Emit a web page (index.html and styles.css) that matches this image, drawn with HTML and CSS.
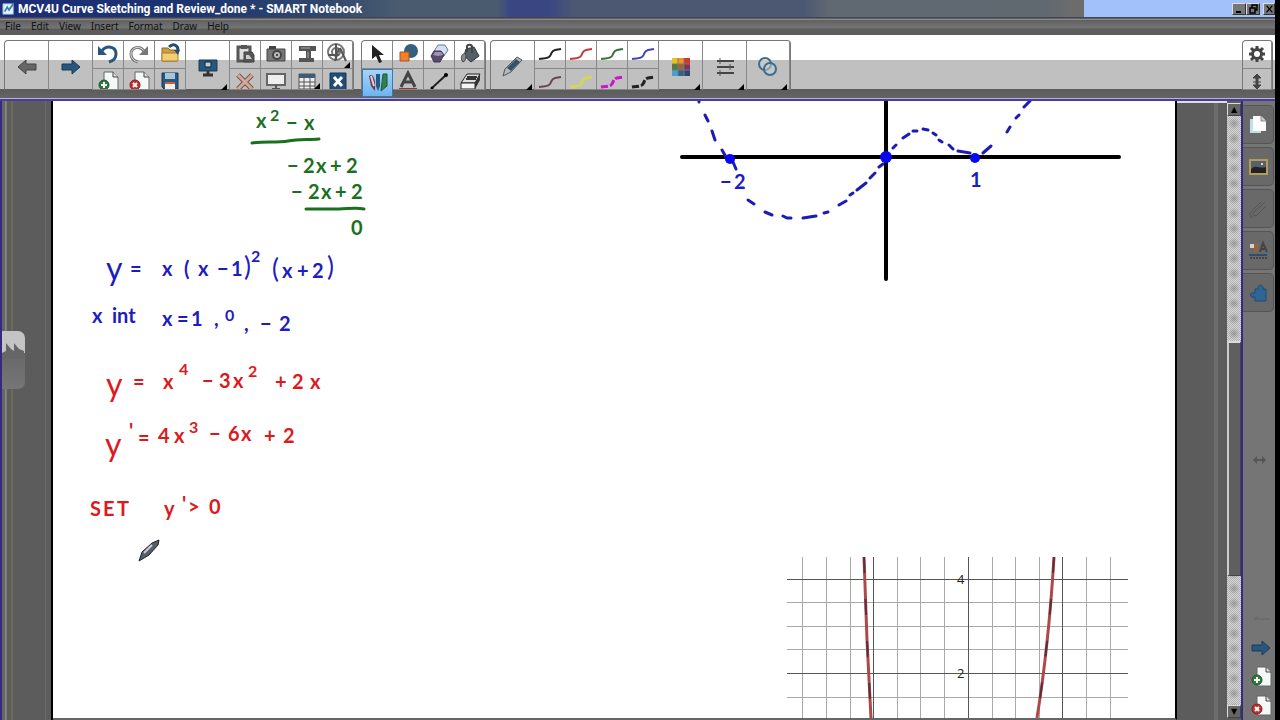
FILE: index.html
```html
<!DOCTYPE html>
<html lang="en">
<head>
    <meta charset="UTF-8">
    <meta name="viewport" content="width=device-width, initial-scale=1.0">
    <title>MCV4U Curve Sketching and Review_done * - SMART Notebook</title>
    <link rel="stylesheet" href="styles.css">
</head>
<body>
    <!-- shared icons -->
    <svg class="defs" aria-hidden="true">
        <symbol id="i-next" viewBox="0 0 24 24"><path d="M3 9h10V5l8 7-8 7v-4H3z" fill="#28567c" stroke="#183a58"/></symbol>
        <symbol id="i-page" viewBox="0 0 24 24"><path d="M8 2h9l5 5v14H8z" fill="#f4f8f8" stroke="#666"/><path d="M17 2v5h5" fill="#ddd" stroke="#444"/></symbol>
        <symbol id="i-add" viewBox="0 0 24 24"><use href="#i-page"/><circle cx="8" cy="15" r="5" fill="#2e7a3e" stroke="#1f5a2b"/><path d="M5 15h6M8 12v6" stroke="#fff" stroke-width="2"/></symbol>
        <symbol id="i-del" viewBox="0 0 24 24"><use href="#i-page"/><circle cx="8" cy="15" r="5" fill="#c22f2f" stroke="#8a1c1c"/><path d="M6 13l4 4M10 13l-4 4" stroke="#fff" stroke-width="2"/></symbol>
        <symbol id="i-line" viewBox="0 0 24 24"><path d="M1 17c5-1 9 0 11-3s1-5 5-6l6-1" fill="none" stroke="currentColor"/></symbol>
    </svg>

    <div class="window">
        <header class="titlebar">
            <svg class="app-icon" viewBox="0 0 16 16"><path d="M1 2h12v12H1z" fill="#e8f2fa" stroke="#7aa6cc"/><path d="M3 11l3-5 2 3 5-7" fill="none" stroke="#3a80b0" stroke-width="2"/></svg>
            <h1>MCV4U Curve Sketching and Review_done * - SMART Notebook</h1>
            <div class="window-buttons">
                <button aria-label="Minimize"><svg viewBox="0 0 12 10"><path d="M3 8h5" stroke="#000" stroke-width="2"/></svg></button>
                <button aria-label="Restore"><svg viewBox="0 0 12 10"><path d="M5 4V1h5v5H8M3 4h5v5H3z" fill="none" stroke="#000" stroke-width="1.5"/></svg></button>
                <button class="close" aria-label="Close"><svg viewBox="0 0 12 10"><path d="M3 1l7 8M10 1L3 9" stroke="#000" stroke-width="1.5"/></svg></button>
            </div>
        </header>

        <nav class="menubar">
            <button>File</button>
            <button>Edit</button>
            <button>View</button>
            <button>Insert</button>
            <button>Format</button>
            <button>Draw</button>
            <button>Help</button>
        </nav>

        <div class="toolbar">
            <div class="group">
                <button class="wide" aria-label="Previous page"><svg viewBox="0 0 24 24"><path d="M21 9H11V5l-8 7 8 7v-4h10z" fill="#666" stroke="#444"/></svg></button>
                <button class="wide" aria-label="Next page"><svg><use href="#i-next"/></svg></button>
                <button aria-label="Undo"><svg viewBox="0 0 24 24"><path d="M6 9c4-6 14-5 14 3 0 4-3 7-7 8" fill="none" stroke="#28567c" stroke-width="3"/><path d="M2 4v9h9z" fill="#28567c"/></svg></button>
                <button aria-label="Redo"><svg viewBox="0 0 24 24"><path d="M17 9C13 3 4 5 4 12c0 4 3 7 7 8" fill="none" stroke="#777" stroke-width="3"/><path d="M17 9C13 3 4 5 4 12c0 4 3 7 7 8" fill="none" stroke="#ddd"/><path d="M21 4v9h-9z" fill="#777"/></svg></button>
                <button aria-label="Open"><svg viewBox="0 0 24 24"><path d="M4 6h6l2 2h7v11H4z" fill="#cf9f3e" stroke="#8b6a2a"/><path d="M4 11h16v8H4z" fill="#f3cf72" stroke="#a57e32"/><path d="M11 5c4-4 9-2 9 3" fill="none" stroke="#294d72" stroke-width="3"/><path d="M16 8h6l-2 5z" fill="#294d72"/></svg></button>
                <button class="wide menu" aria-label="Display options"><svg viewBox="0 0 24 24"><path d="M3 5h18v11H3z" fill="#28567c" stroke="#183a58"/><path d="M9 7h6v5H9z" fill="#bcd" stroke="#123"/><path d="M12 16v3M7 20h10" stroke="#333" stroke-width="3"/></svg></button>
                <button aria-label="Paste"><svg viewBox="0 0 24 24"><path d="M5 5h12v14H5z" fill="#ddd" stroke="#555" stroke-width="3"/><path d="M8 3h6v4H8z" fill="#555"/><path d="M11 10h8l2 3v7H11z" fill="#555" stroke="#444"/><path d="M13 13h3l3 4h-6z" fill="#ccc"/></svg></button>
                <button aria-label="Screen capture"><svg viewBox="0 0 24 24"><path d="M3 7h18v12H3z" fill="#777" stroke="#444"/><path d="M5 4h7v3H5z" fill="#444"/><circle cx="13" cy="13" r="5" fill="#444"/><circle cx="13" cy="13" r="3" fill="#bbb"/><circle cx="13" cy="13" r="1" fill="#222"/></svg></button>
                <button aria-label="Document camera"><svg viewBox="0 0 24 24"><path d="M4 4h17v5H4zM11 9h5v7h-5zM4 16h15v4H4z" fill="#555"/><path d="M6 6h9M13 10v6" stroke="#aaa"/></svg></button>
                <button class="menu" aria-label="Measurement tools"><svg viewBox="0 0 24 24"><circle cx="10" cy="10" r="8" fill="none" stroke="#777" stroke-width="2"/><circle cx="10" cy="10" r="4" fill="none" stroke="#777" stroke-width="2"/><path d="M10 2v16M2 13h11M13 6l-4 13M14 6l6 13" stroke="#555" stroke-width="2"/></svg></button>

                <button aria-label="Add page"><svg><use href="#i-add"/></svg></button>
                <button aria-label="Delete page"><svg><use href="#i-del"/></svg></button>
                <button aria-label="Save"><svg viewBox="0 0 24 24"><path d="M4 3h16v16H6l-2-2z" fill="#29587f" stroke="#183a58"/><path d="M7 3h10v6H7z" fill="#a8c4d8"/><path d="M7 12h10v7H7z" fill="#f2eee8"/><path d="M7 13h10" stroke="#d25b38" stroke-width="2"/></svg></button>
                <button aria-label="Delete"><svg viewBox="0 0 24 24"><path d="M5 5l14 14M19 5L5 19" stroke="#76544a" stroke-width="5"/><path d="M5 5l14 14M19 5L5 19" stroke="#d0aa9c" stroke-width="3"/></svg></button>
                <button aria-label="Screen shade"><svg viewBox="0 0 24 24"><path d="M3 4h18v11H3z" fill="#eee" stroke="#666" stroke-width="2"/><path d="M12 15v4M8 19h8" stroke="#555" stroke-width="2"/></svg></button>
                <button class="menu" aria-label="Table"><svg viewBox="0 0 24 24"><path d="M4 4h16v15H4z" fill="#eee" stroke="#555"/><path d="M4 4h16v4H4z" fill="#395e7e"/><path d="M4 12h16M4 16h16M9 4v15M15 4v15" stroke="#555"/></svg></button>
                <button aria-label="Math tools"><svg viewBox="0 0 24 24"><path d="M4 3h16v17H4z" fill="#234d78" stroke="#173858"/><path d="M8 7l8 9M16 7l-8 9" stroke="#fff" stroke-width="3"/></svg></button>
            </div>

            <div class="group">
                <button aria-label="Select"><svg viewBox="0 0 24 24"><path d="M7 3v14l4-3 3 7 3-1-3-7h5z" fill="#222"/></svg></button>
                <button aria-label="Shapes"><svg viewBox="0 0 24 24"><circle cx="15" cy="9" r="7" fill="#34607e"/><path d="M4 10h9v9H4z" fill="#f08229" stroke="#b34d1c"/></svg></button>
                <button aria-label="Regular polygons"><svg viewBox="0 0 24 24"><path d="M11 3h7l3 5-4 6h-7l-3-5z" fill="#d5e0ef" stroke="#657a98"/><path d="M7 9h7l3 4-4 7H7l-3-6z" fill="#5c4a6e" stroke="#44355a"/><path d="M8 10h6l2 3-5 1-5-1z" fill="#9a96b4"/></svg></button>
                <button aria-label="Fill"><svg viewBox="0 0 24 24"><path d="M8 7l8-2 5 9-8 6-7-6z" fill="#53606c" stroke="#333"/><path d="M9 10V5c0-3 5-3 5 0v6" fill="none" stroke="#444" stroke-width="2"/><path d="M7 11c-5 2-4 7-2 9 3-1 3-5 3-8z" fill="#888" stroke="#444"/></svg></button>
                <button class="selected" aria-label="Pens" aria-pressed="true"><svg viewBox="0 0 24 24"><path d="M3 5c3-3 5 1 6 6v9L5 15z" fill="#713748"/><path d="M5 5l3 10" stroke="#ecd" stroke-width="2"/><path d="M10 3h4v12l-2 5-2-5z" fill="#215a80"/><path d="M17 3h4v12l-6 5z" fill="#2e824c" stroke="#1d5937"/></svg></button>
                <button aria-label="Text"><svg viewBox="0 0 24 24"><path d="M5 17L12 3l7 14M8 12h8" fill="none" stroke="#444" stroke-width="3"/><path d="M3 19h18" stroke="#a2352c" stroke-width="2"/></svg></button>
                <button aria-label="Lines"><svg viewBox="0 0 24 24"><path d="M5 18L19 5" stroke="#222" stroke-width="2"/><circle cx="5" cy="18" r="1.5"/><circle cx="19" cy="5" r="2"/></svg></button>
                <button aria-label="Eraser"><svg viewBox="0 0 24 24"><path d="M9 4h13l-5 9H3z" fill="#ddd" stroke="#222"/><path d="M3 13h14v6H3z" fill="#f5f5f5" stroke="#222"/><path d="M17 13l5-9v6l-5 9z" fill="#333"/><path d="M9 7h10M8 9h10" stroke="#333" stroke-width="2"/></svg></button>
            </div>

            <div class="group">
                <button class="wide menu" aria-label="Pen type"><svg viewBox="0 0 24 24"><path d="M2 21l2-7L16 2l5 3-11 12z" fill="#aebac4" stroke="#555"/><path d="M6 13l9-9 4 3-9 9z" fill="#34526a"/></svg></button>
                <button class="pen ink-black" aria-label="Black pen"><svg><use href="#i-line"/></svg></button>
                <button class="pen ink-red" aria-label="Red pen"><svg><use href="#i-line"/></svg></button>
                <button class="pen ink-green" aria-label="Green pen"><svg><use href="#i-line"/></svg></button>
                <button class="pen ink-blue" aria-label="Blue pen"><svg><use href="#i-line"/></svg></button>
                <button class="wide menu" aria-label="Colour"><svg viewBox="0 0 24 24"><path d="M3 3h6v6H3z" fill="#e6c31f"/><path d="M9 3h6v6H9z" fill="#ef9623"/><path d="M15 3h6v6h-6z" fill="#d2362f"/><path d="M3 9h6v6H3z" fill="#557a3c"/><path d="M9 9h6v6H9z" fill="#a1633a"/><path d="M15 9h6v6h-6z" fill="#843052"/><path d="M3 15h6v6H3z" fill="#41a3cf"/><path d="M9 15h6v6H9z" fill="#2f638f"/><path d="M15 15h6v6h-6z" fill="#304373"/><path d="M9 3v18M15 3v18M3 9h18M3 15h18" stroke="#777"/></svg></button>
                <button class="wide menu" aria-label="Line style"><svg viewBox="0 0 24 24"><path d="M4 6h17M4 12h17M4 18h17" stroke="#444" stroke-width="2"/><path d="M7 3v6M17 9v6M7 15v6" stroke="#555"/></svg></button>
                <button class="wide menu" aria-label="Transparency"><svg viewBox="0 0 24 24"><g fill="#c3d3de" fill-opacity=".5" stroke="#456a86" stroke-width="2"><circle cx="9" cy="9" r="6"/><circle cx="14" cy="14" r="6"/></g></svg></button>

                <button class="pen ink-plum" aria-label="Plum pen"><svg><use href="#i-line"/></svg></button>
                <button class="pen ink-yellow thick" aria-label="Yellow highlighter"><svg><use href="#i-line"/></svg></button>
                <button class="pen ink-magenta thick dashed" aria-label="Magenta dashed pen"><svg><use href="#i-line"/></svg></button>
                <button class="pen ink-black thick dashed" aria-label="Black dashed pen"><svg><use href="#i-line"/></svg></button>
            </div>

            <div class="group settings">
                <button aria-label="Customize toolbar"><svg viewBox="0 0 24 24"><path d="M12 4v16M4 12h16M6 6l12 12M18 6L6 18" stroke="#444" stroke-width="3"/><circle cx="12" cy="12" r="6" fill="#444"/><circle cx="12" cy="12" r="3" fill="#fff"/></svg></button>
                <button aria-label="Move toolbar"><svg viewBox="0 0 24 24"><path d="M12 6v11" stroke="#444" stroke-width="3"/><path d="M8 8l4-4 4 4zM8 15l4 4 4-4zM8 12h8" fill="#444" stroke="#444"/></svg></button>
            </div>
        </div>

        <main class="workspace">
            <aside class="gutter">
                <button class="flyout" aria-label="Show panel"><svg viewBox="0 0 22 20"><path d="M0 20V14l4-2V4l5 6 3 2V4l5 6 5 2v8z" fill="#666"/></svg></button>
            </aside>

            <section class="page" aria-label="Page">
                <svg class="ink" viewBox="53 101 1122 617" preserveAspectRatio="xMinYMin slice">
                    <!-- long division -->
                    <g class="hand green">
                        <text y="128" x="256">x<tspan class="sup" x="270" y="121">2</tspan><tspan x="286 304" y="130">−x</tspan></text>
                        <path d="M252 143c12-2 24 0 36-2 11-2 20-1 31-2"/>
                        <text y="173" x="287 303 316 330 346">−2x+2</text>
                        <text y="199" x="291 308 321 335 351">−2x+2</text>
                        <path d="M306 209h33c9 0 16-2 25 0"/>
                        <text y="235" x="351">0</text>
                    </g>

                    <g class="hand blue">
                        <text y="280" x="106"><tspan class="tall">y</tspan><tspan x="130 162 184 198 217 231" y="276">=x(x−1</tspan><tspan class="paren" x="244">)</tspan><tspan class="sup" x="251" y="262">2</tspan><tspan class="paren" x="272" y="278">(</tspan><tspan x="282 297 312" y="278">x+2</tspan><tspan class="paren" x="327" y="276">)</tspan></text>
                        <text y="323" x="92">x<tspan x="112">int</tspan><tspan x="162 177 191 214" y="326">x=1,</tspan><tspan class="sup" x="225" y="321">0</tspan><tspan x="244 260 279" y="331">,−2</tspan></text>
                    </g>

                    <g class="hand red">
                        <text y="396" x="106"><tspan class="tall">y</tspan><tspan x="133 163" y="389">=x</tspan><tspan class="sup" x="179" y="375">4</tspan><tspan x="202 219 233" y="388">−3x</tspan><tspan class="sup" x="248" y="377">2</tspan><tspan x="275 292 310" y="389">+2x</tspan></text>
                        <text y="456" x="105"><tspan class="tall">y</tspan><tspan x="129 138" y="438 445">'=</tspan><tspan x="158 174" y="443">4x</tspan><tspan class="sup" x="189" y="433">3</tspan><tspan x="209 228 241" y="441">−6x</tspan><tspan x="264 283" y="443">+2</tspan></text>
                        <text y="516" x="90 103 117">SET<tspan x="164 182 188 209" y="516 511 514 514">y'&gt;0</tspan></text>
                    </g>

                    <!-- curve sketch -->
                    <path class="axis" d="M682 157h437M886 101v178"/>
                    <path class="sketch" d="M699 101v1M705 115l3 6M712 131l3 9M722 150l4 7M733 162l3 7M748 200l6 4M765 212l7 3M783 216l4 2h4M803 218l13-2M824 213l4-1M839 205l7-4M850 195l3-2M857 190l9-7M870 178l5-5M879 167l4-3M893 148l3-3M903 138l6-4M913 131h4M923 129l5 1M933 133l3 2M939 140l3 2M949 145l4 4M958 151l12 2M983 153l8-7M1007 132l3-5M1016 118l3-3M1024 107l6-6"/>
                    <g class="roots"><circle cx="730" cy="159" r="5"/><circle cx="886" cy="157" r="6"/><circle cx="975" cy="158" r="5"/></g>
                    <g class="hand blue">
                        <text y="189" x="720 734">−2</text>
                        <text y="187" x="970">1</text>
                    </g>

                    <!-- plotted graph -->
                    <path class="grid" d="M802 557v161M826 557v161M850 557v161M897 557v161M920 557v161M944 557v161M992 557v161M1015 557v161M1039 557v161M1086 557v161M1110 557v161M787 602h341M787 626h341M787 649h341M787 697h341"/>
                    <path class="grid major" d="M787 579h341M787 673h341M873 557v161M968 557v161M1062 557v161"/>
                    <path class="plot" d="M864 557l3 83 4 78M1054 557c-3 50-8 105-17 161"/>
                    <path class="plot shade" d="M864 557l3 83 4 78M1054 557c-3 50-8 105-17 161"/>
                    <text class="tick" x="957" y="584">4</text>
                    <text class="tick" x="957" y="678">2</text>

                    <!-- pen pointer -->
                    <path d="M139 561l3-9 10-9 7-3-1 5-9 10z" fill="#555f6a" stroke="#222"/>
                    <path d="M144 553l8-8" stroke="#ccd" stroke-width="2"/>
                </svg>
            </section>

            <div class="margin"></div>

            <div class="scrollbar">
                <button class="step" aria-label="Scroll up">▲</button>
                <div class="track"><div class="thumb"></div></div>
                <button class="step" aria-label="Scroll down">▼</button>
            </div>

            <aside class="sidebar">
                <button class="tab" aria-label="Page sorter"><svg viewBox="0 0 24 24"><path d="M4 6h11v14H4z" fill="#bfe0e8"/><path d="M7 3h8l5 5v10H7z" fill="#fff"/><path d="M15 3v5h5" fill="#ccc" stroke="#888"/></svg></button>
                <button class="tab" aria-label="Gallery"><svg viewBox="0 0 24 24"><path d="M4 5h17v14H4z" fill="#56616a" stroke="#b59a5c" stroke-width="2"/><path d="M5 14c5-5 8 0 15-2v6H5z" fill="#222"/><circle cx="16" cy="9" r="1" fill="#fff"/></svg></button>
                <button class="tab" aria-label="Attachments"><svg viewBox="0 0 24 24"><path d="M19 5L8 15c-2 3 0 5 3 3l9-9M15 5L5 15c-3 4 0 6 2 5" fill="none" stroke="#555"/></svg></button>
                <button class="tab" aria-label="Properties"><svg viewBox="0 0 24 24"><path d="M4 5h4v4H4z" fill="#e0d0c0"/><path d="M8 5h4v8H8z" fill="#9a6040"/><path d="M14 13l3-9 4 9M15 10h5" fill="none" stroke="#444" stroke-width="2"/><path d="M3 16h18" stroke="#2d4c70" stroke-width="2"/><path d="M4 19h17" stroke="#444" stroke-width="2" stroke-dasharray="2 1"/></svg></button>
                <button class="tab" aria-label="Add-ons"><svg viewBox="0 0 24 24"><path d="M9 8h3c-1-5 6-5 5 0h3v12H9v-4c-6 2-6-6 0-4z" fill="#2f6594" stroke="#204a70"/></svg></button>
                <div class="resize"><svg viewBox="0 0 24 24"><path d="M6 12l4-4v3h5V8l4 4-4 4v-3h-5v3z" fill="#555"/></svg></div>
                <button aria-label="Previous page"><svg viewBox="0 0 24 24"><path d="M5 12h16M5 12l4-2" stroke="#666" fill="none"/></svg></button>
                <button aria-label="Next page"><svg><use href="#i-next"/></svg></button>
                <button aria-label="Add page"><svg><use href="#i-add"/></svg></button>
                <button aria-label="Delete page"><svg><use href="#i-del"/></svg></button>
            </aside>
        </main>
    </div>
</body>
</html>
```
FILE: styles.css
```css
* {
    box-sizing: border-box;
}
body {
    margin: 0;
    background: #000;
    font-family: "Noto Sans", Tahoma, sans-serif;
    font-size: 11px;
}
button {
    margin: 0;
    padding: 0;
    border: 0;
    background: none;
    font: inherit;
    color: inherit;
}
.defs {
    position: absolute;
    width: 0;
    height: 0;
}
.window {
    display: flex;
    flex-direction: column;
    height: 100vh;
    margin-right: 5px;
    overflow: hidden;
}

/* title and menu */
.titlebar {
    display: flex;
    align-items: center;
    flex: none;
    height: 18px;
    padding-left: 2px;
    color: #fff;
    background: linear-gradient(90deg, #1c2c78 0%, #1c3470 14%, #30486c 26%, #4a5b70 31%, #4a5b70 39%, #3a4682 40%, #3a4682 43%, #4c5872 45%, #4c5872 63%, #606872 65%, #606870 82%, #6c6c6c 84%, #6c6c6c 85%, #a2c0fa 85%);
    border-bottom: 1px solid #445;
}
.app-icon {
    width: 14px;
    height: 14px;
    margin-right: 2px;
}
.titlebar h1 {
    flex: 1;
    margin: 0;
    font-family: Roboto, sans-serif;
    font-size: 12px;
    line-height: 16px;
    white-space: nowrap;
}
.window-buttons {
    display: flex;
}
.window-buttons button {
    width: 14px;
    height: 12px;
    background: #777;
    border: 1px solid #333;
    border-top-color: #ddd;
    border-left-color: #ddd;
}
.window-buttons .close {
    margin-left: 3px;
    width: 12px;
}
.window-buttons svg {
    display: block;
    width: 100%;
    height: 10px;
}
.menubar {
    display: flex;
    flex: none;
    gap: 10px;
    height: 17px;
    padding-left: 5px;
    color: #111;
    font-size: 10px;
    line-height: 17px;
    background: linear-gradient(#5f5f66 1px, #8b8b8b 1px, #8b8b8b 2px, #606060 2px, #747474 10px, #5c5c5c 11px);
}

/* toolbar */
.toolbar {
    display: flex;
    flex: none;
    height: 66px;
    padding: 5px 2px 0 4px;
    background: linear-gradient(#fff 25px, #c0c0c0 25px, #c0c0c0 54px, #5b5b5b 54px, #646464 63px, #b8b4d0 63px, #b8b4d0 64px, #4a3c9c 64px);
}
.group {
    display: grid;
    grid-template-rows: 28px 21px;
    height: 50px;
    margin-right: 4px;
    border: 1px solid #777;
    border-bottom: 0;
    border-radius: 4px 4px 0 0;
}
.group:first-child {
    grid-template-columns: 44px 44px 31px 31px 31px 44px 31px 31px 31px 30px;
    margin-right: 7px;
}
.group:nth-child(2) {
    grid-template-columns: 31px 31px 31px 30px;
}
.group:nth-child(3) {
    grid-template-columns: 44px 31px 31px 31px 31px 44px 44px 43px;
}
.group.settings {
    grid-template-columns: 29px;
    margin-left: auto;
    margin-right: 0;
}
.group button {
    position: relative;
    display: flex;
    align-items: flex-start;
    justify-content: center;
    padding-top: 1px;
    border-right: 1px solid #888;
    border-bottom: 1px solid #888;
    overflow: hidden;
}
.group svg {
    flex: none;
    width: 24px;
    height: 24px;
}
.group .wide {
    grid-row: span 2;
    padding-top: 14px;
    border-bottom: 0;
}
.group .menu::after {
    content: "";
    position: absolute;
    right: 2px;
    bottom: 0;
    border: 3px solid transparent;
    border-right-color: #000;
    border-bottom-color: #000;
}
.group .selected {
    height: 28px;
    background: linear-gradient(#a4d4fa, #6fb4ee);
    border: 1px solid #3a78b4;
}
.pen svg { stroke-width: 2; }
.pen.thick svg { stroke-width: 3; }
.pen.dashed svg { stroke-dasharray: 7 2; }
.ink-black { color: #222; }
.ink-red { color: #c8373a; }
.ink-green { color: #3a7040; }
.ink-blue { color: #4444b4; }
.ink-plum { color: #6b4458; }
.ink-yellow { color: #d2d65a; }
.ink-magenta { color: #d012d0; }

/* workspace */
.workspace {
    display: flex;
    flex: 1;
    min-height: 0;
    background: #5c5c5c;
}
.gutter {
    display: flex;
    align-items: flex-start;
    flex: none;
    width: 53px;
    padding-top: 230px;
    border-left: 2px solid #342a80;
    border-right: 2px solid #000;
    background: linear-gradient(90deg, #666 3px, #8a8a8a 3px, #777 5px, #5c5c5c 5px, #5c5c5c 9px, #6c6a58 9px, #6c6a58 11px, #5c5c5c 11px, #5c5c5c 43px, #696969 43px, #696969 44px, #5c5c5c 44px);
}
.flyout {
    display: flex;
    align-items: flex-start;
    width: 23px;
    height: 58px;
    padding-top: 8px;
    border-radius: 0 7px 7px 0;
    background: linear-gradient(#c4c4c4 22px, #686868 22px, #767676);
}
.flyout svg {
    width: 22px;
    height: 20px;
}
.page {
    flex: 1;
    min-width: 0;
    background: #fff;
    border-right: 2px solid #000;
    border-bottom: 2px solid #666;
}
.ink {
    display: block;
    width: 100%;
    height: 100%;
}
.hand {
    font-family: Lato, sans-serif;
    font-size: 20px;
    stroke-width: 3;
    stroke-linecap: round;
}
.hand path {
    fill: none;
    stroke: currentColor;
}
.hand text {
    fill: currentColor;
    font-weight: bold;
}
.hand .sup {
    font-size: 16px;
}
.hand .tall {
    font-size: 32px;
    font-weight: normal;
}
.hand .paren {
    font-size: 26px;
    font-weight: normal;
}
.green { color: #1b701f; }
.blue { color: #1c1cc0; }
.red { color: #dc1a1e; }
.axis {
    fill: none;
    stroke: #000;
    stroke-width: 4;
    stroke-linecap: round;
}
.sketch {
    fill: none;
    stroke: #1c1cb4;
    stroke-width: 3;
    stroke-linecap: round;
}
.roots { fill: #0808f0; }
.grid {
    fill: none;
    stroke: #aaa;
    shape-rendering: crispEdges;
}
.grid.major { stroke: #555; }
.plot {
    fill: none;
    stroke: #b04848;
    stroke-width: 3;
}
.plot.shade {
    stroke: #5c3038;
    stroke-width: 2;
    stroke-dasharray: 16 26;
}
.tick {
    font-family: "Open Sans", sans-serif;
    font-size: 13px;
    fill: #222;
}
.margin {
    flex: none;
    width: 50px;
    border-top: 2px solid #ddd;
    background: linear-gradient(90deg, #5c5c5c 37px, #6c6c6c 37px, #6c6c6c 41px, #5c5c5c 41px);
}
.scrollbar {
    display: flex;
    flex-direction: column;
    flex: none;
    width: 16px;
    padding: 2px 0;
    border-right: 2px solid #342a80;
}
.step {
    height: 13px;
    font-family: "DejaVu Sans", sans-serif;
    font-size: 8px;
    line-height: 10px;
    color: #000;
    background: #666;
    border: 1px solid #444;
    border-top-color: #ddd;
    border-left-color: #ddd;
}
.track {
    flex: 1;
    padding-top: 225px;
    background:
        radial-gradient(circle, rgba(90, 90, 90, 0.4), transparent 6px) 0 0 / 14px 15px,
        repeating-conic-gradient(#b0b0b0 0 25%, #d8d8d8 0 50%) 0 0 / 2px 2px;
}
.thumb {
    height: 235px;
    background: #5f5f5f;
    border: 1px solid #444;
    border-top: 2px solid #ddd;
    border-left: 2px solid #ccc;
}
.sidebar {
    display: flex;
    flex-direction: column;
    flex: none;
    width: 32px;
    padding: 4px 1px 0 0;
    background: #757575;
}
.sidebar button {
    display: flex;
    align-items: center;
    justify-content: center;
    flex: none;
    height: 29px;
    padding-left: 4px;
}
.sidebar .tab {
    height: 39px;
    margin-bottom: 3px;
    padding-left: 0;
    background: #696969;
    border: 1px solid #555;
    border-left: 0;
    border-radius: 0 5px 5px 0;
}
.sidebar svg {
    width: 24px;
    height: 24px;
}
.resize {
    display: flex;
    align-items: center;
    justify-content: center;
    flex: 1;
}
```
